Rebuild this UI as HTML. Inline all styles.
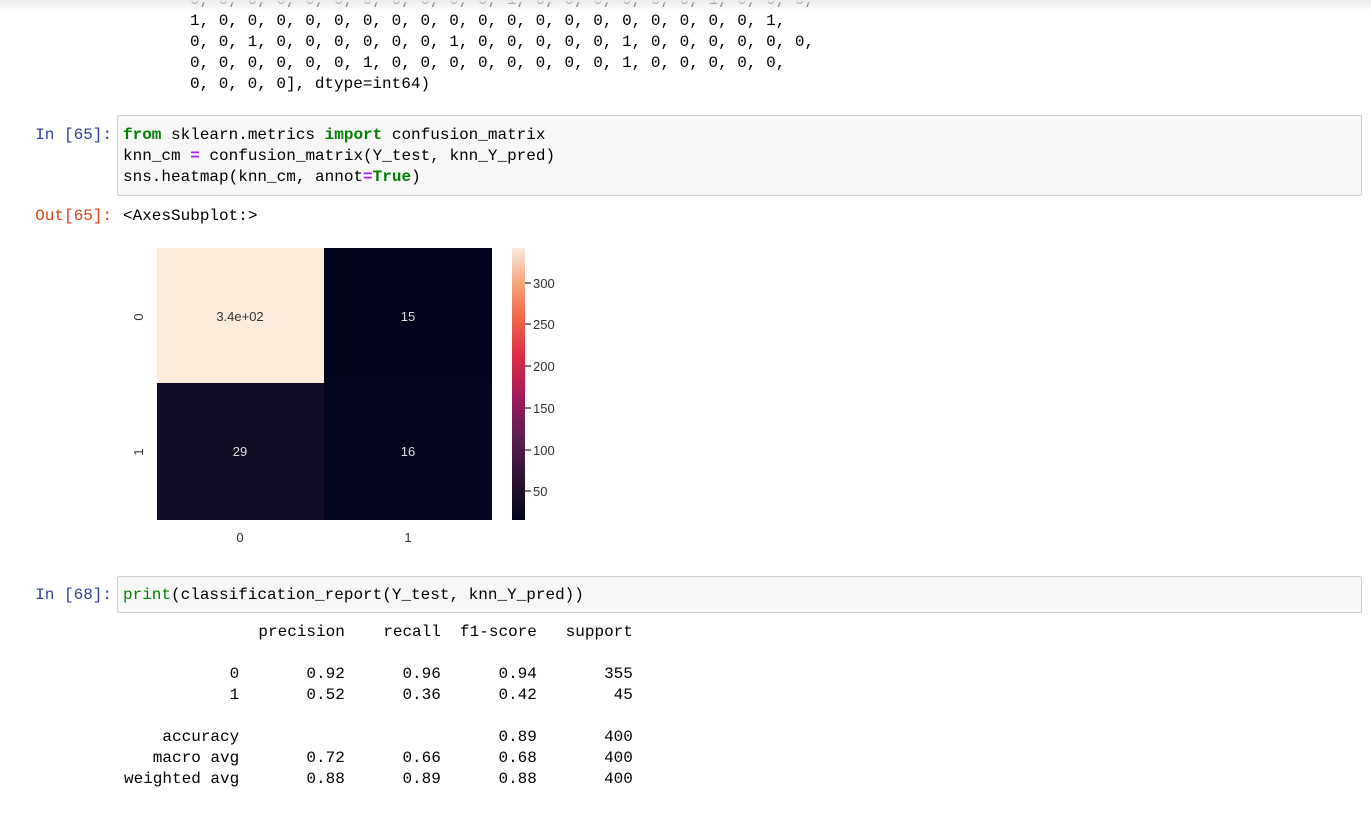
<!DOCTYPE html>
<html><head><meta charset="utf-8"><style>
html,body{margin:0;padding:0;background:#fff;width:1371px;height:833px;overflow:hidden;position:relative;font-family:"Liberation Mono",monospace;font-size:16px;color:#000}
pre{margin:0;font-family:"Liberation Mono",monospace;font-size:16px;line-height:21px;position:absolute;white-space:pre}
.p{position:absolute;font-family:"Liberation Mono",monospace;font-size:16px;line-height:21px;text-align:right;width:112px;left:0}
.in{color:#303F9F}.out{color:#D84315}
.box{position:absolute;left:117px;width:1243px;background:#f7f7f7;border:1px solid #cfcfcf;border-radius:2px}
.k{color:#008000;font-weight:bold}.o{color:#AA22FF;font-weight:bold}.b{color:#008000}
.shadow{position:absolute;left:0;top:0;width:1371px;height:12px;background:linear-gradient(#ececec,rgba(255,255,255,0))}
</style></head><body>
<pre style="left:190px;top:-10px">0, 0, 0, 0, 0, 0, 0, 0, 0, 0, 0, 1, 0, 0, 0, 0, 0, 0, 1, 0, 0, 0,
1, 0, 0, 0, 0, 0, 0, 0, 0, 0, 0, 0, 0, 0, 0, 0, 0, 0, 0, 0, 1,
0, 0, 1, 0, 0, 0, 0, 0, 0, 1, 0, 0, 0, 0, 0, 1, 0, 0, 0, 0, 0, 0,
0, 0, 0, 0, 0, 0, 1, 0, 0, 0, 0, 0, 0, 0, 0, 1, 0, 0, 0, 0, 0,
0, 0, 0, 0], dtype=int64)</pre>
<div class="shadow"></div>
<div class="p in" style="top:125px">In [65]:</div>
<div class="box" style="top:115px;height:79px"></div>
<pre style="left:123px;top:125px"><span class="k">from</span> sklearn.metrics <span class="k">import</span> confusion_matrix
knn_cm <span class="o">=</span> confusion_matrix(Y_test, knn_Y_pred)
sns.heatmap(knn_cm, annot<span class="o">=</span><span class="k">True</span>)</pre>
<div class="p out" style="top:206px">Out[65]:</div>
<pre style="left:123px;top:206px">&lt;AxesSubplot:&gt;</pre>
<svg style="position:absolute;left:0;top:0" width="600" height="560" font-family="Liberation Sans, sans-serif">
<defs><linearGradient id="g" x1="0" y1="1" x2="0" y2="0">
<stop offset="0" stop-color="#03051A"/><stop offset="0.15" stop-color="#2B1330"/><stop offset="0.3" stop-color="#5B1E51"/><stop offset="0.45" stop-color="#A11A5B"/><stop offset="0.6" stop-color="#DD2C45"/><stop offset="0.75" stop-color="#F1684B"/><stop offset="0.88" stop-color="#F6AA82"/><stop offset="1" stop-color="#FAEBDD"/></linearGradient></defs>
<rect x="157" y="248" width="167" height="135" fill="#FAEBDD"/>
<rect x="324" y="248" width="168" height="135" fill="#03051A"/>
<rect x="157" y="383" width="167" height="137" fill="#130D24"/>
<rect x="324" y="383" width="168" height="137" fill="#04061B"/>
<g font-size="13" text-anchor="middle">
<text x="240" y="321" fill="#333">3.4e+02</text>
<text x="408" y="321" fill="#ddd">15</text>
<text x="240" y="456" fill="#ddd">29</text>
<text x="408" y="456" fill="#ddd">16</text>
<text x="240" y="542" fill="#333">0</text>
<text x="408" y="542" fill="#333">1</text>
<text transform="translate(143,317) rotate(-90)" fill="#333">0</text>
<text transform="translate(143,452) rotate(-90)" fill="#333">1</text>
</g>
<rect x="512" y="248" width="13" height="272" fill="url(#g)"/>
<g stroke="#333" stroke-width="1.3">
<line x1="525" y1="283" x2="531" y2="283"/><line x1="525" y1="324" x2="531" y2="324"/><line x1="525" y1="366" x2="531" y2="366"/><line x1="525" y1="408" x2="531" y2="408"/><line x1="525" y1="450" x2="531" y2="450"/><line x1="525" y1="491" x2="531" y2="491"/></g>
<g font-size="13" fill="#333">
<text x="533" y="288">300</text><text x="533" y="329">250</text><text x="533" y="371">200</text><text x="533" y="413">150</text><text x="533" y="455">100</text><text x="533" y="496">50</text></g>
</svg>
<div class="p in" style="top:585px">In [68]:</div>
<div class="box" style="top:576px;height:35px"></div>
<pre style="left:123px;top:585px"><span class="b">print</span>(classification_report(Y_test, knn_Y_pred))</pre>
<pre style="left:124px;top:622px">              precision    recall  f1-score   support

           0       0.92      0.96      0.94       355
           1       0.52      0.36      0.42        45

    accuracy                           0.89       400
   macro avg       0.72      0.66      0.68       400
weighted avg       0.88      0.89      0.88       400</pre>
</body></html>
